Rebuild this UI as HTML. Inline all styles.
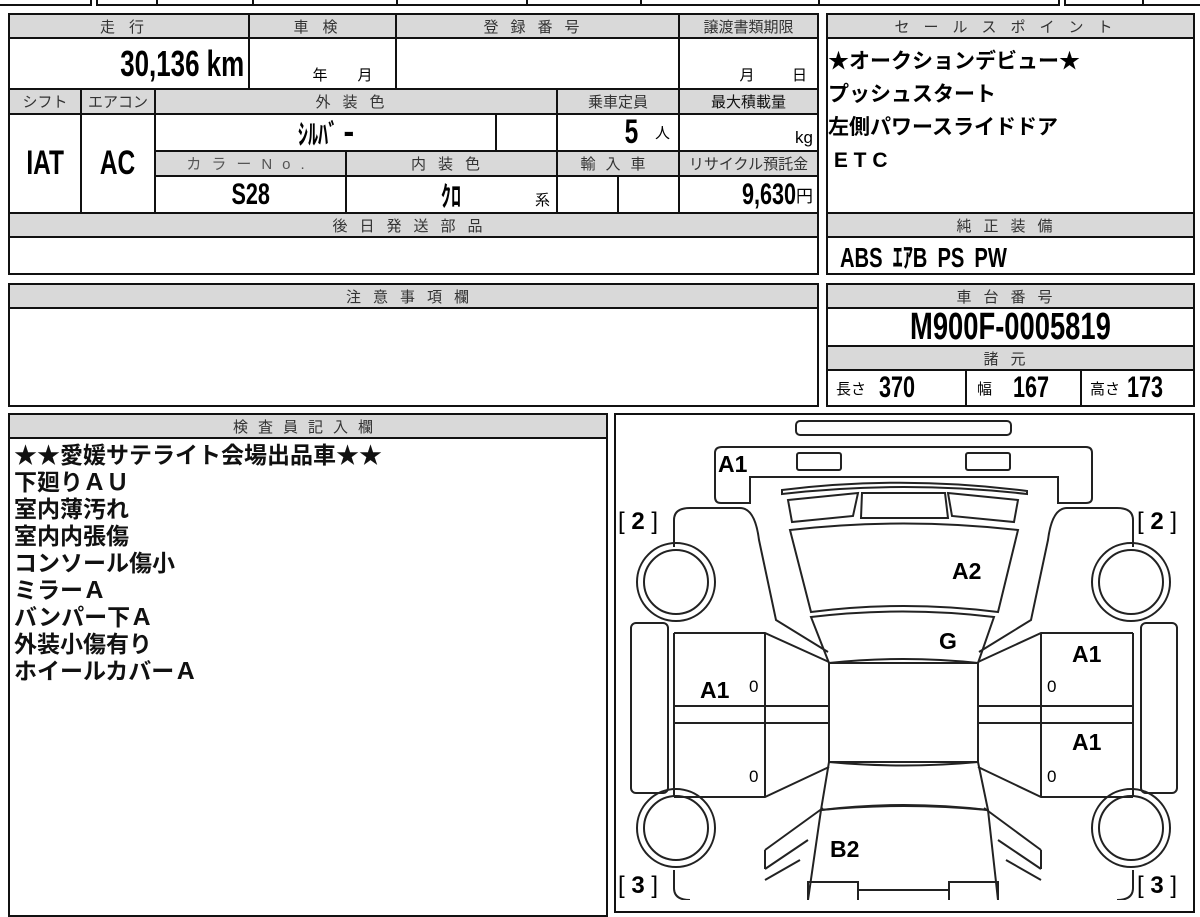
<!DOCTYPE html>
<html><head><meta charset="utf-8"><style>
*{margin:0;padding:0;box-sizing:border-box}
body{width:1200px;height:900px;background:#fff;position:relative;overflow:hidden;font-family:"Liberation Sans","Noto Sans CJK JP",sans-serif;color:#000}
.c{position:absolute;border:2px solid #111;background:#fff;display:flex;align-items:center;justify-content:center;overflow:hidden;white-space:nowrap}
.h{background:#d9d9d9;color:#333;font-size:15px;letter-spacing:9px}
.n{display:inline-block;transform:scaleX(.72);font-weight:bold}
.t{position:absolute;font-weight:bold;white-space:nowrap}
</style></head><body>
<div class="c" style="left:-2px;top:-30px;width:94px;height:36px"></div>
<div class="c" style="left:96px;top:-30px;width:62px;height:36px"></div>
<div class="c" style="left:156px;top:-30px;width:98px;height:36px"></div>
<div class="c" style="left:252px;top:-30px;width:146px;height:36px"></div>
<div class="c" style="left:396px;top:-30px;width:132px;height:36px"></div>
<div class="c" style="left:526px;top:-30px;width:116px;height:36px"></div>
<div class="c" style="left:640px;top:-30px;width:180px;height:36px"></div>
<div class="c" style="left:818px;top:-30px;width:242px;height:36px"></div>
<div class="c" style="left:1064px;top:-30px;width:80px;height:36px"></div>
<div class="c" style="left:1142px;top:-30px;width:60px;height:36px"></div>

<div class="c h" style="left:8px;top:13px;width:242px;height:26px;letter-spacing:14px">走行</div>
<div class="c h" style="left:248px;top:13px;width:149px;height:26px;letter-spacing:14px">車検</div>
<div class="c h" style="left:395px;top:13px;width:285px;height:26px;letter-spacing:12px">登録番号</div>
<div class="c h" style="left:678px;top:13px;width:141px;height:26px;letter-spacing:0">譲渡書類期限</div>
<div class="c" style="left:8px;top:37px;width:242px;height:53px;justify-content:flex-end;padding-right:4px"><span class="n" style="font-size:36px;transform-origin:right">30,136 km</span></div>
<div class="c" style="left:248px;top:37px;width:149px;height:53px;align-items:flex-end;font-size:15px;padding-bottom:3px;padding-left:40px">年&emsp;&emsp;月</div>
<div class="c" style="left:395px;top:37px;width:285px;height:53px"></div>
<div class="c" style="left:678px;top:37px;width:141px;height:53px;align-items:flex-end;justify-content:flex-end;font-size:15px;padding:0 10px 3px 0">月&emsp;&emsp;&ensp;日</div>

<div class="c h" style="left:8px;top:88px;width:74px;height:27px;letter-spacing:0">シフト</div>
<div class="c h" style="left:80px;top:88px;width:76px;height:27px;letter-spacing:0">エアコン</div>
<div class="c h" style="left:154px;top:88px;width:404px;height:27px;letter-spacing:12px">外装色</div>
<div class="c h" style="left:556px;top:88px;width:124px;height:27px;letter-spacing:0">乗車定員</div>
<div class="c h" style="left:678px;top:88px;width:141px;height:27px;letter-spacing:0;color:#111">最大積載量</div>
<div class="c" style="left:8px;top:113px;width:74px;height:101px"><span class="n" style="font-size:34px">IAT</span></div>
<div class="c" style="left:80px;top:113px;width:76px;height:101px"><span class="n" style="font-size:34px">AC</span></div>
<div class="c" style="left:154px;top:113px;width:343px;height:39px"><span class="n" style="font-size:28px">ｼﾙﾊﾞ ｰ</span></div>
<div class="c" style="left:495px;top:113px;width:63px;height:39px"></div>
<div class="c" style="left:556px;top:113px;width:124px;height:39px;justify-content:flex-end;padding-right:8px"><span class="n" style="font-size:34px">5</span><span style="font-size:15px;margin-left:14px">人</span></div>
<div class="c" style="left:678px;top:113px;width:141px;height:39px;justify-content:flex-end;align-items:flex-end;padding:0 4px 2px 0;font-size:17px">kg</div>
<div class="c h" style="left:154px;top:150px;width:193px;height:27px;letter-spacing:10px;color:#555">カラーNo.</div>
<div class="c h" style="left:345px;top:150px;width:213px;height:27px;letter-spacing:12px">内装色</div>
<div class="c h" style="left:556px;top:150px;width:124px;height:27px;letter-spacing:10px">輸入車</div>
<div class="c h" style="left:678px;top:150px;width:141px;height:27px;letter-spacing:0">リサイクル預託金</div>
<div class="c" style="left:154px;top:175px;width:193px;height:39px"><span class="n" style="font-size:30px">S28</span></div>
<div class="c" style="left:345px;top:175px;width:213px;height:39px"><span class="n" style="font-size:28px">ｸﾛ</span><span style="position:absolute;right:6px;bottom:2px;font-size:15px">系</span></div>
<div class="c" style="left:556px;top:175px;width:63px;height:39px"></div>
<div class="c" style="left:617px;top:175px;width:63px;height:39px"></div>
<div class="c" style="left:678px;top:175px;width:141px;height:39px;justify-content:flex-end;padding-right:4px"><span class="n" style="font-size:30px;transform-origin:right">9,630</span><span style="font-size:17px">円</span></div>
<div class="c h" style="left:8px;top:212px;width:811px;height:26px;letter-spacing:12px">後日発送部品</div>
<div class="c" style="left:8px;top:236px;width:811px;height:39px"></div>

<div class="c h" style="left:826px;top:13px;width:369px;height:26px;letter-spacing:14px">セールスポイント</div>
<div class="c" style="left:826px;top:37px;width:369px;height:177px;display:block;font-weight:bold;font-size:21px;line-height:33px;padding-top:6px">★オークションデビュー★<br>プッシュスタート<br>左側パワースライドドア<br>&nbsp;E T C</div>
<div class="c h" style="left:826px;top:212px;width:369px;height:26px;letter-spacing:12px">純正装備</div>
<div class="c" style="left:826px;top:236px;width:369px;height:39px;justify-content:flex-start;padding-left:12px"><span class="n" style="font-size:28px;transform-origin:left">ABS&ensp;ｴｱB&ensp;PS&ensp;PW</span></div>

<div class="c h" style="left:8px;top:283px;width:811px;height:26px;letter-spacing:12px">注意事項欄</div>
<div class="c" style="left:8px;top:307px;width:811px;height:100px"></div>

<div class="c h" style="left:826px;top:283px;width:369px;height:26px;letter-spacing:12px">車台番号</div>
<div class="c" style="left:826px;top:307px;width:369px;height:40px"><span class="n" style="font-size:38px">M900F-0005819</span></div>
<div class="c h" style="left:826px;top:345px;width:369px;height:26px;letter-spacing:12px">諸元</div>
<div class="c" style="left:826px;top:369px;width:141px;height:38px;justify-content:flex-start;padding-left:8px"><span style="font-size:15px">長さ</span><span class="n" style="font-size:30px;margin-left:6px">370</span></div>
<div class="c" style="left:965px;top:369px;width:117px;height:38px;justify-content:flex-start;padding-left:10px"><span style="font-size:15px">幅</span><span class="n" style="font-size:30px;margin-left:14px">167</span></div>
<div class="c" style="left:1080px;top:369px;width:115px;height:38px;justify-content:flex-start;padding-left:8px"><span style="font-size:15px">高さ</span><span class="n" style="font-size:30px;margin-left:0">173</span></div>

<div class="c h" style="left:8px;top:413px;width:600px;height:26px;letter-spacing:10px">検査員記入欄</div>
<div class="c" style="left:8px;top:437px;width:600px;height:480px;display:block;font-weight:bold;font-size:23px;line-height:27px;padding:3px 0 0 4px;color:#111">★★愛媛サテライト会場出品車★★<br>下廻りＡＵ<br>室内薄汚れ<br>室内内張傷<br>コンソール傷小<br>ミラーＡ<br>バンパー下Ａ<br>外装小傷有り<br>ホイールカバーＡ</div>

<div class="c" style="left:614px;top:413px;width:581px;height:500px"></div>
<svg style="position:absolute;left:0;top:0" width="1200" height="900" viewBox="0 0 1200 900" fill="none" stroke="#222" stroke-width="2">
<rect x="796" y="421" width="215" height="14" rx="4"/>
<path d="M722 447 H1086 Q1092 447 1092 453 V498 Q1092 503 1086 503 H1058 V477 H750 V503 H721 Q715 503 715 497 V453 Q715 447 722 447 Z"/>
<rect x="797" y="453" width="44" height="17" rx="2"/>
<rect x="966" y="453" width="44" height="17" rx="2"/>
<path d="M782 490 Q903 475 1027 491 L1027 494 Q903 480 782 494 Z"/>
<path d="M788 500 L858 493 L853 516 L792 522 Z"/>
<path d="M1018 500 L948 493 L952 516 L1014 522 Z"/>
<path d="M862 493 L945 493 L948 518 L861 518 Z"/>
<path d="M790 530 Q903 517 1018 530 L998 612 Q903 600 811 612 Z"/>
<path d="M811 617 Q903 606 994 617 L978 663 Q903 655 829 663 Z"/>
<rect x="829" y="663" width="149" height="99"/>
<path d="M829 762 Q903 769 978 762 L988 810 Q903 800 821 810 Z"/>
<path d="M821 810 Q903 802 988 810 L998 900 M821 810 L808 900"/>
<path d="M674 547 V520 Q674 508 690 508 H740 Q755 508 759 540 L776 620 L828 652 M674 633 V797 M674 633 H765 L829 662 M674 706 H829 M674 723 H829 M674 797 H765 L829 767 M765 633 V797 M765 850 L823 808 M765 850 V869 M765 869 L808 840 M765 880 L800 860"/>
<path d="M674 870 V888 Q674 900 690 900"/>
<path d="M1133 547 V520 Q1133 508 1117 508 H1067 Q1052 508 1048 540 L1031 620 L979 652 M1133 633 V797 M1133 633 H1041 L978 662 M1133 706 H978 M1133 723 H978 M1133 797 H1041 L978 767 M1041 633 V797 M1041 850 L984 808 M1041 850 V869 M1041 869 L998 840 M1041 880 L1006 860"/>
<path d="M1133 870 V888 Q1133 900 1117 900"/>
<rect x="631" y="623" width="37" height="170" rx="5"/>
<rect x="1141" y="623" width="36" height="170" rx="5"/>
<circle cx="676" cy="582" r="39"/><circle cx="676" cy="582" r="32"/>
<circle cx="676" cy="828" r="39"/><circle cx="676" cy="828" r="32"/>
<circle cx="1131" cy="582" r="39"/><circle cx="1131" cy="582" r="32"/>
<circle cx="1131" cy="828" r="39"/><circle cx="1131" cy="828" r="32"/>
<path d="M808 900 V882 H858 V900 M949 900 V882 H998 V900 M858 890 H949"/>
</svg>
<div class="t" style="left:618px;top:508px;font-size:24px;font-weight:normal">[ <b>2</b> ]</div>
<div class="t" style="left:1137px;top:508px;font-size:24px;font-weight:normal">[ <b>2</b> ]</div>
<div class="t" style="left:618px;top:872px;font-size:24px;font-weight:normal">[ <b>3</b> ]</div>
<div class="t" style="left:1137px;top:872px;font-size:24px;font-weight:normal">[ <b>3</b> ]</div>
<div class="t" style="left:718px;top:451px;font-size:23px">A1</div>
<div class="t" style="left:952px;top:558px;font-size:23px">A2</div>
<div class="t" style="left:939px;top:628px;font-size:23px">G</div>
<div class="t" style="left:1072px;top:641px;font-size:23px">A1</div>
<div class="t" style="left:700px;top:677px;font-size:23px">A1</div>
<div class="t" style="left:1072px;top:729px;font-size:23px">A1</div>
<div class="t" style="left:830px;top:836px;font-size:23px">B2</div>
<div class="t" style="left:749px;top:677px;font-size:17px;font-weight:normal">0</div>
<div class="t" style="left:1047px;top:677px;font-size:17px;font-weight:normal">0</div>
<div class="t" style="left:749px;top:767px;font-size:17px;font-weight:normal">0</div>
<div class="t" style="left:1047px;top:767px;font-size:17px;font-weight:normal">0</div>
</body></html>
